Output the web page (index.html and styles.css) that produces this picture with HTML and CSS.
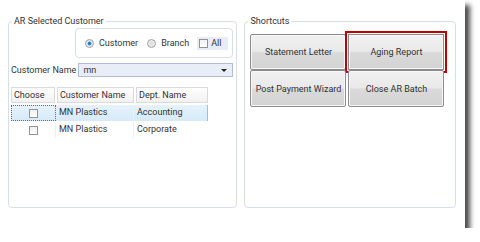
FILE: index.html
```html
<!DOCTYPE html>
<html lang="en">
<head>
    <meta charset="UTF-8">
    <title>AR Shortcuts</title>
    <link rel="stylesheet" href="styles.css">
</head>
<body>
    <div class="window">
        <div class="group customer-group">
            <div class="group-title">AR Selected Customer</div>

            <div class="radio-box">
                <span class="radio checked"></span>
                <span class="radio-label">Customer</span>
                <span class="radio"></span>
                <span class="radio-label">Branch</span>
                <span class="all-option">
                    <span class="check"></span>
                    <span>All</span>
                </span>
            </div>

            <div class="name-row">
                <span class="name-label">Customer Name</span>
                <div class="combo">
                    <span>mn</span>
                    <span class="arrow"></span>
                </div>
            </div>

            <div class="grid">
                <div class="grid-head">
                    <div class="head-cell col-choose">Choose</div>
                    <div class="head-cell col-name">Customer Name</div>
                    <div class="head-cell col-dept">Dept. Name</div>
                </div>
                <div class="grid-row selected">
                    <div class="cell col-choose focus"><span class="check"></span></div>
                    <div class="cell col-name">MN Plastics</div>
                    <div class="cell col-dept">Accounting</div>
                </div>
                <div class="grid-row">
                    <div class="cell col-choose"><span class="check"></span></div>
                    <div class="cell col-name">MN Plastics</div>
                    <div class="cell col-dept">Corporate</div>
                </div>
            </div>
        </div>

        <div class="group shortcut-group">
            <div class="group-title">Shortcuts</div>
            <div class="shortcut-grid">
                <button class="shortcut">Statement Letter</button>
                <button class="shortcut highlight">Aging Report</button>
                <button class="shortcut">Post Payment Wizard</button>
                <button class="shortcut">Close AR Batch</button>
            </div>
        </div>
    </div>
</body>
</html>
```

FILE: styles.css
```css
body {
    margin: 0;
    background-color: #fff;
    font-family: Roboto, "Liberation Sans", Arial, sans-serif;
    font-size: 9px;
    color: #333;
}
.window {
    width: 465px;
    height: 228px;
    box-sizing: border-box;
    padding: 21px 9px 0 8px;
    display: flex;
    gap: 7px;
    background-color: #fff;
    box-shadow: 5px 5px 5px rgba(0, 0, 0, 0.7);
}
.group {
    height: 187px;
    box-sizing: border-box;
    border: 1px solid #d6dfe6;
    border-radius: 4px;
}
.customer-group {
    width: 230px;
}
.shortcut-group {
    width: 212px;
}
.group-title {
    width: fit-content;
    height: 12px;
    line-height: 12px;
    margin: -7px 0 0 3px;
    padding: 0 2px;
    background-color: #fff;
}

/* radio options */
.radio-box {
    height: 30px;
    box-sizing: border-box;
    margin: 1px 3px 0 66px;
    padding-left: 9px;
    display: flex;
    align-items: center;
    border: 1px solid #d6dfe6;
    border-radius: 4px;
}
.radio {
    width: 9px;
    height: 9px;
    box-sizing: border-box;
    border: 1px solid #a0a0a0;
    border-radius: 50%;
    background: radial-gradient(circle, #dcdcdc 0%, #f6f6f6 100%);
    margin-top: 1px;
}
.radio.checked {
    background: radial-gradient(circle, #1a6fb4 0%, #3d8fd0 35%, #d8e6f2 45%, #f4f4f4 100%);
}
.radio-label {
    margin: 0 9px 0 5px;
}
.all-option {
    height: 13px;
    padding: 0 7px 0 2px;
    margin-left: -1px;
    display: flex;
    align-items: center;
    gap: 3px;
    background-color: #e7ecf6;
}
.check {
    display: inline-block;
    width: 9px;
    height: 9px;
    box-sizing: border-box;
    border: 1px solid #929292;
    background: linear-gradient(#f0f0f0, #ffffff);
}

/* customer name */
.name-row {
    margin: 5px 3px 0 2px;
    display: flex;
    align-items: center;
    gap: 2px;
}
.combo {
    flex: 1;
    height: 14px;
    box-sizing: border-box;
    padding: 0 5px 0 4px;
    display: flex;
    align-items: center;
    justify-content: space-between;
    border: 1px solid #b3bcd6;
    background-color: #e9edf7;
}
.arrow {
    width: 0;
    height: 0;
    border-left: 3px solid transparent;
    border-right: 3px solid transparent;
    border-top: 3px solid #222;
}

/* grid */
.grid {
    margin: 10px 0 0 2px;
    width: 197px;
}
.grid-head {
    display: flex;
    gap: 2px;
}
.head-cell {
    height: 16px;
    line-height: 15px;
    box-sizing: border-box;
    padding-left: 2px;
    border: 1px solid #dadada;
    background: linear-gradient(#ffffff, #f1f1f1);
}
.head-cell.col-choose { width: 44px; }
.head-cell.col-name { width: 77px; }
.head-cell.col-dept { width: 72px; }
.grid-row {
    display: flex;
    height: 16px;
    margin-top: 1px;
}
.grid-row.selected {
    margin-top: 2px;
    background: linear-gradient(#e6f2fc, #d6eafa);
    border-right: 1px solid #8fc2ec;
}
.cell {
    height: 16px;
    line-height: 15px;
    box-sizing: border-box;
    padding-left: 3px;
    border-right: 1px solid #f0f0f0;
}
.cell.col-choose {
    width: 45px;
    padding: 0;
    display: flex;
    align-items: center;
    justify-content: center;
}
.cell.col-name { width: 78px; }
.cell.col-dept { width: 73px; border-right: none; }
.cell.focus {
    border: 1px dotted #6a6a6a;
}

/* shortcut buttons */
.shortcut-grid {
    margin: 7px 0 0 5px;
    display: grid;
    grid-template-columns: 96px 96px;
    grid-template-rows: 36px 37px;
    column-gap: 2px;
}
.shortcut {
    font-family: inherit;
    font-size: 9px;
    color: #333;
    border: 1px solid #8c8c8c;
    border-radius: 2px;
    background: linear-gradient(#f1f1f1 0%, #e9e9e9 48%, #dadada 52%, #d3d3d3 100%);
    box-shadow: inset 0 0 0 1px #f7f7f7;
    padding: 0;
}
.shortcut.highlight {
    border-radius: 0;
    outline: 2px solid #c00000;
    outline-offset: 1px;
}
```
